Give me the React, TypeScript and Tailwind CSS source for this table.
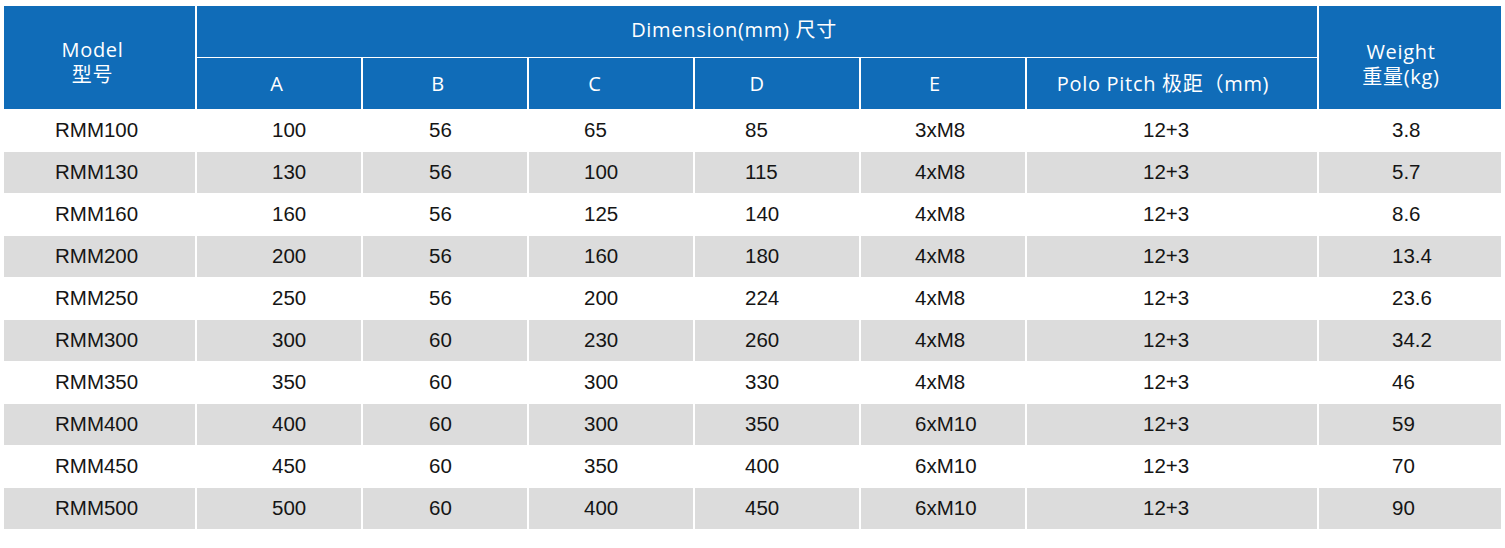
import React from 'react';

const rows = [
  ['RMM100', '100', '56', '65', '85', '3xM8', '12+3', '3.8'],
  ['RMM130', '130', '56', '100', '115', '4xM8', '12+3', '5.7'],
  ['RMM160', '160', '56', '125', '140', '4xM8', '12+3', '8.6'],
  ['RMM200', '200', '56', '160', '180', '4xM8', '12+3', '13.4'],
  ['RMM250', '250', '56', '200', '224', '4xM8', '12+3', '23.6'],
  ['RMM300', '300', '60', '230', '260', '4xM8', '12+3', '34.2'],
  ['RMM350', '350', '60', '300', '330', '4xM8', '12+3', '46'],
  ['RMM400', '400', '60', '300', '350', '6xM10', '12+3', '59'],
  ['RMM450', '450', '60', '350', '400', '6xM10', '12+3', '70'],
  ['RMM500', '500', '60', '400', '450', '6xM10', '12+3', '90'],
];

// left padding of the data text in each column
const cellPad = [
  'pl-[51px]',
  'pl-[75px]',
  'pl-[66px]',
  'pl-[55px]',
  'pl-[50px]',
  'pl-[54px]',
  'pl-[116px]',
  'pl-[73px]',
];

const head =
  "bg-[#106cb8] text-white text-[20px] tracking-[0.7px] font-['Open_Sans','Noto_Sans_CJK_SC',sans-serif]";

export default function App() {
  return (
    <div className="w-[1505px] h-[548px] bg-white pt-[6px] pl-[4px]">
      <div className="grid grid-cols-[191px_164px_164px_164px_164px_164px_290px_182px] grid-rows-[51px_51px_repeat(10,41px)] gap-x-[2px] gap-y-[1px] text-[#151515] font-['Liberation_Sans',Arial,sans-serif]">
        {/* Header */}
        <div className={`${head} row-span-2 flex flex-col items-center justify-center pt-[8px] pr-[14px] leading-[25px]`}>
          <span>Model</span>
          <span>型号</span>
        </div>
        <div className={`${head} col-span-6 flex items-center justify-center pr-[46px] pb-[4px]`}>
          Dimension(mm) 尺寸
        </div>
        <div className={`${head} row-span-2 flex flex-col items-center justify-center pt-[12px] pr-[18px] leading-[25px]`}>
          <span>Weight</span>
          <span>重量(kg)</span>
        </div>
        <div className={`${head} flex items-center justify-center pr-[4px]`}>A</div>
        <div className={`${head} flex items-center justify-center pr-[14px]`}>B</div>
        <div className={`${head} flex items-center justify-center pr-[32px]`}>C</div>
        <div className={`${head} flex items-center justify-center pr-[40px]`}>D</div>
        <div className={`${head} flex items-center justify-center pr-[16px]`}>E</div>
        <div className={`${head} flex items-center justify-center pr-[18px]`}>Polo Pitch 极距（mm)</div>

        {/* Body */}
        {rows.map((row, i) =>
          row.map((val, j) => (
            <div
              key={`${i}-${j}`}
              className={`flex items-center text-[20.5px] ${cellPad[j]} ${i % 2 === 1 ? 'bg-[#dcdcdc]' : 'bg-white'}`}
            >
              {val}
            </div>
          ))
        )}
      </div>
    </div>
  );
}
